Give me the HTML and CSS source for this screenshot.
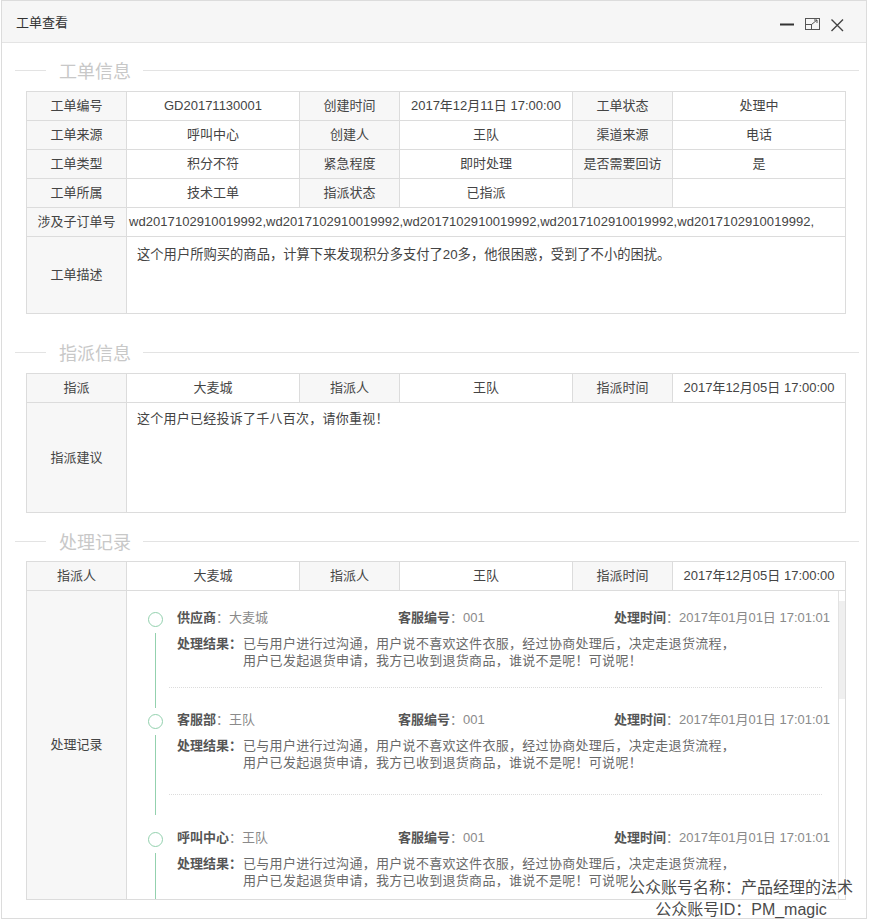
FILE: index.html
```html
<!DOCTYPE html>
<html lang="zh-CN">
<head>
  <meta charset="UTF-8">
  <title>工单查看</title>
  <link rel="stylesheet" href="styles.css">
</head>
<body>
  <div class="dialog">
    <div class="dialog-head">
      <span class="dialog-title">工单查看</span>
      <div class="dialog-tools">
        <svg width="16" height="16" viewBox="0 0 16 16"><path d="M1 8.5H15" stroke="#333" stroke-width="2"/></svg>
        <svg width="16" height="16" viewBox="0 0 16 16" fill="none" stroke="#555" stroke-width="1">
          <rect x="1.5" y="2.5" width="14" height="11"/>
          <rect x="1.5" y="8.5" width="6" height="5"/>
          <path d="M7.5 8.5L13 4M10 4H13V7"/>
        </svg>
        <svg width="16" height="16" viewBox="0 0 16 16"><path d="M2.5 3.5L14 15M14 3.5L2.5 15" stroke="#444" stroke-width="1.4"/></svg>
      </div>
    </div>

    <div class="dialog-body">
      <div class="sec-title"><span>工单信息</span></div>
      <table class="grid">
        <colgroup>
          <col class="c-label"><col class="c-val"><col class="c-label"><col class="c-val"><col class="c-label"><col class="c-val">
        </colgroup>
        <tr>
          <th>工单编号</th><td>GD20171130001</td>
          <th>创建时间</th><td>2017年12月11日 17:00:00</td>
          <th>工单状态</th><td>处理中</td>
        </tr>
        <tr>
          <th>工单来源</th><td>呼叫中心</td>
          <th>创建人</th><td>王队</td>
          <th>渠道来源</th><td>电话</td>
        </tr>
        <tr>
          <th>工单类型</th><td>积分不符</td>
          <th>紧急程度</th><td>即时处理</td>
          <th>是否需要回访</th><td>是</td>
        </tr>
        <tr>
          <th>工单所属</th><td>技术工单</td>
          <th>指派状态</th><td>已指派</td>
          <th></th><td></td>
        </tr>
        <tr>
          <th>涉及子订单号</th>
          <td colspan="5" class="td-orders">wd2017102910019992,wd2017102910019992,wd2017102910019992,wd2017102910019992,wd2017102910019992,</td>
        </tr>
        <tr class="tr-desc">
          <th>工单描述</th>
          <td colspan="5" class="td-text td-desc">这个用户所购买的商品，计算下来发现积分多支付了20多，他很困惑，受到了不小的困扰。</td>
        </tr>
      </table>

      <div class="sec-title sec-assign"><span>指派信息</span></div>
      <table class="grid">
        <colgroup>
          <col class="c-label"><col class="c-val"><col class="c-label"><col class="c-val"><col class="c-label"><col class="c-val">
        </colgroup>
        <tr>
          <th>指派</th><td>大麦城</td>
          <th>指派人</th><td>王队</td>
          <th>指派时间</th><td>2017年12月05日 17:00:00</td>
        </tr>
        <tr class="tr-advice">
          <th>指派建议</th>
          <td colspan="5" class="td-text">这个用户已经投诉了千八百次，请你重视！</td>
        </tr>
      </table>

      <div class="sec-title sec-record"><span>处理记录</span></div>
      <table class="grid grid-record">
        <colgroup>
          <col class="c-label"><col class="c-val"><col class="c-label"><col class="c-val"><col class="c-label"><col class="c-val">
        </colgroup>
        <tr>
          <th>指派人</th><td>大麦城</td>
          <th>指派人</th><td>王队</td>
          <th>指派时间</th><td>2017年12月05日 17:00:00</td>
        </tr>
        <tr class="tr-record">
          <th>处理记录</th>
          <td colspan="5" class="td-record">
            <div class="rec-wrap">
              <div class="rec-list">

                <div class="rec">
                  <div class="rec-axis"><i class="dot"></i><i class="axis-line"></i></div>
                  <div class="rec-main">
                    <div class="rec-head">
                      <span class="rec-who"><b>供应商</b>：大麦城</span>
                      <span class="rec-no"><b>客服编号</b>：001</span>
                      <span class="rec-time"><b>处理时间</b>：2017年01月01日 17:01:01</span>
                    </div>
                    <div class="rec-body">
                      <b>处理结果：</b>
                      <p>已与用户进行过沟通，用户说不喜欢这件衣服，经过协商处理后，决定走退货流程，<br>用户已发起退货申请，我方已收到退货商品，谁说不是呢！可说呢！</p>
                    </div>
                    <div class="rec-sep"></div>
                  </div>
                </div>

                <div class="rec rec-long">
                  <div class="rec-axis"><i class="dot"></i><i class="axis-line"></i></div>
                  <div class="rec-main">
                    <div class="rec-head">
                      <span class="rec-who"><b>客服部</b>：王队</span>
                      <span class="rec-no"><b>客服编号</b>：001</span>
                      <span class="rec-time"><b>处理时间</b>：2017年01月01日 17:01:01</span>
                    </div>
                    <div class="rec-body">
                      <b>处理结果：</b>
                      <p>已与用户进行过沟通，用户说不喜欢这件衣服，经过协商处理后，决定走退货流程，<br>用户已发起退货申请，我方已收到退货商品，谁说不是呢！可说呢！</p>
                    </div>
                    <div class="rec-sep"></div>
                  </div>
                </div>

                <div class="rec">
                  <div class="rec-axis"><i class="dot"></i><i class="axis-line"></i></div>
                  <div class="rec-main">
                    <div class="rec-head">
                      <span class="rec-who"><b>呼叫中心</b>：王队</span>
                      <span class="rec-no"><b>客服编号</b>：001</span>
                      <span class="rec-time"><b>处理时间</b>：2017年01月01日 17:01:01</span>
                    </div>
                    <div class="rec-body">
                      <b>处理结果：</b>
                      <p>已与用户进行过沟通，用户说不喜欢这件衣服，经过协商处理后，决定走退货流程，<br>用户已发起退货申请，我方已收到退货商品，谁说不是呢！可说呢！</p>
                    </div>
                    <div class="rec-sep"></div>
                  </div>
                </div>

              </div>
              <div class="scroll"><div class="scroll-thumb"></div></div>
            </div>
          </td>
        </tr>
      </table>
    </div>

    <div class="watermark">
      <div>公众账号名称：产品经理的法术</div>
      <div>公众账号ID：PM_magic</div>
    </div>
  </div>
</body>
</html>
```

FILE: styles.css
```css
body {
  margin: 0;
  background: #fff;
  font-family: "Liberation Sans", "Noto Sans CJK SC", sans-serif;
  font-size: 13px;
  color: #444;
}

.dialog {
  position: relative;
  box-sizing: border-box;
  width: 866px;
  margin-left: 1px;
  border: 1px solid #dcdcdc;
  background: #fff;
}

.dialog-head {
  display: flex;
  align-items: center;
  justify-content: space-between;
  height: 41px;
  padding: 0 21px 0 14px;
  background: #f6f6f6;
  border-bottom: 1px solid #e4e4e4;
}

.dialog-title {
  font-size: 13px;
  color: #333;
}

.dialog-tools {
  display: flex;
  align-items: center;
  gap: 9px;
  margin-top: 4px;
}

.dialog-tools svg {
  display: block;
}

.dialog-body {
  padding: 15px 7px 18px 13px;
}

/* section title with lines on both sides */
.sec-title {
  display: flex;
  align-items: center;
  height: 24px;
  font-size: 18px;
  color: #c8c8c8;
}

.sec-title::before,
.sec-title::after {
  content: "";
  height: 1px;
  background: #e3e3e3;
}

.sec-title::before {
  width: 31px;
  margin-right: 13px;
}

.sec-title::after {
  flex: 1;
  margin-left: 12px;
}

.sec-assign {
  margin-top: 26px;
}

.sec-record {
  margin-top: 16px;
}

.grid {
  width: 819px;
  margin: 9px 0 0 11px;
  border-collapse: collapse;
  table-layout: fixed;
}

.grid-record {
  margin-top: 8px;
}

.c-label {
  width: 100px;
}

.c-val {
  width: 173px;
}

.grid th,
.grid td {
  height: 28px;
  padding: 0;
  border: 1px solid #dcdcdc;
  text-align: center;
  font-weight: normal;
  white-space: nowrap;
  line-height: 18px;
}

.grid th {
  background: #f7f7f7;
  color: #444;
}

.grid td {
  color: #444;
}

.grid td.td-orders {
  text-align: left;
  padding-left: 2px;
  letter-spacing: 0.06px;
}

.grid td.td-text {
  height: auto;
  text-align: left;
  vertical-align: top;
  padding: 7px 10px 0;
  letter-spacing: 0.25px;
}

.grid td.td-desc {
  font-size: 13.3px;
  padding-top: 8px;
  line-height: 20px;
  letter-spacing: 0;
}

.tr-desc th {
  height: 76px;
}

.tr-advice th {
  height: 109px;
}

.tr-record th {
  height: 308px;
}

.grid td.td-record {
  height: auto;
  padding: 0;
  vertical-align: top;
}

.rec-wrap {
  display: flex;
  height: 308px;
  overflow: hidden;
}

.rec-list {
  flex: 1;
  padding-top: 18px;
  text-align: left;
  white-space: normal;
}

.scroll {
  width: 6px;
  border-left: 1px solid #e2e2e2;
}

.scroll-thumb {
  height: 98px;
  margin-top: 10px;
  background: #efefef;
}

/* timeline record */
.rec {
  display: grid;
  grid-template-columns: 50px 1fr;
  padding-bottom: 23px;
}

.rec-axis {
  display: flex;
  flex-direction: column;
}

.dot {
  box-sizing: border-box;
  width: 15px;
  height: 15px;
  margin: 3px 0 0 21px;
  border: 1px solid #93d1ae;
  border-radius: 50%;
  background: #fff;
}

.axis-line {
  flex: 1;
  width: 1px;
  margin: 6px 0 -20px 28px;
  background: #93d1ae;
}

.rec-main {
  padding-right: 6px;
}

.rec-head {
  display: flex;
  height: 18px;
  line-height: 18px;
  color: #8a8a8a;
}

.rec-head b {
  color: #555;
}

.rec-who {
  width: 221px;
}

.rec-no {
  width: 216px;
}

.rec-time {
  white-space: nowrap;
}

.rec-body {
  display: flex;
  margin-top: 8px;
  line-height: 17px;
  color: #6a6a6a;
}

.rec-body b {
  width: 66px;
  flex-shrink: 0;
  color: #555;
}

.rec-body p {
  margin: 0;
  white-space: nowrap;
  letter-spacing: 0.3px;
}

.rec-sep {
  margin: 18px 10px 0 -8px;
  border-top: 1px dotted #dcdcdc;
}

.rec-long .rec-sep {
  margin-top: 23px;
}

.rec-long {
  padding-bottom: 34px;
}

.watermark {
  position: absolute;
  left: 617px;
  top: 876px;
  width: 244px;
  text-align: center;
  font-size: 16px;
  line-height: 22px;
  color: #4a4a4a;
  text-shadow: 0 0 2px #fff, 0 0 2px #fff, 0 0 3px #fff;
}
```
